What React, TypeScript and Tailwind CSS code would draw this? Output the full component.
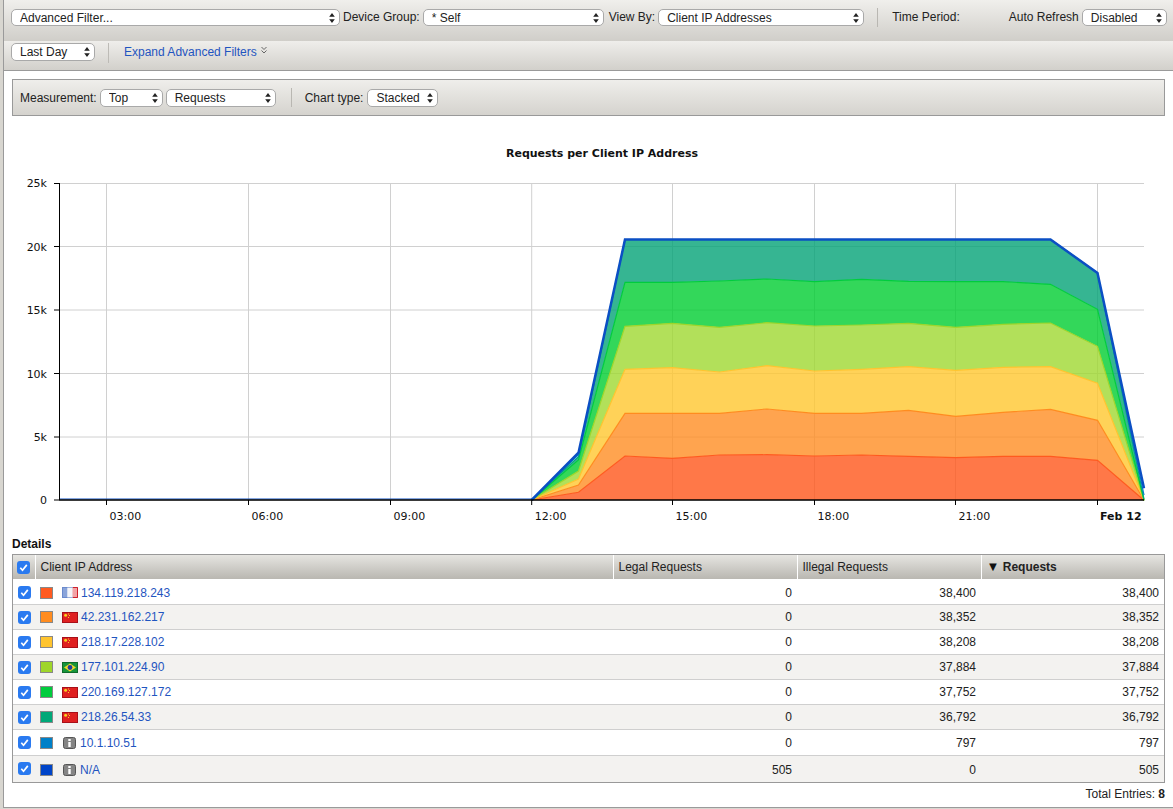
const xs = [531.7, 578.5, 625, 672.3, 719.5, 767, 814.5, 861.5, 908.5, 955.7, 1003, 1050.5, 1097.5, 1144];

const layers = [
  { color: '#ff561a', line: '#ff5a1f', tops: [500, 492.3, 456, 458.3, 455, 454.7, 456, 455, 456.3, 457.7, 456.3, 456.3, 460.3, 500.3] },
  { color: '#ff8d23', line: '#ff8c1f', tops: [500, 485, 413.3, 413.3, 413.3, 409, 413.3, 413.3, 410.3, 416.3, 412.3, 409.3, 420.3, 500.3] },
  { color: '#ffc72e', line: '#ffc42e', tops: [500, 479, 369.3, 367.7, 372, 365.7, 371, 369.3, 366.7, 370.3, 367.3, 366.7, 383.3, 500.3] },
  { color: '#9fd831', line: '#9fd62a', tops: [500, 471, 326.3, 323.3, 327.3, 322.7, 326, 325, 323.3, 327.3, 324.3, 323, 346.3, 500.3] },
  { color: '#00cd31', line: '#00cc3d', tops: [500, 460, 282.3, 282.3, 281, 279, 281.7, 279.3, 281.3, 281.7, 281.7, 284.3, 309.3, 500.3] },
  { color: '#04a277', line: '#00a878', tops: [500, 456.7, 239.5, 239.5, 239.5, 239.5, 239.5, 239.5, 239.5, 239.5, 239.5, 239.5, 273, 499] },
  { color: '#0080c8', line: '#0080c8', tops: [500, 454.7, 239.5, 239.5, 239.5, 239.5, 239.5, 239.5, 239.5, 239.5, 239.5, 239.5, 273, 495] },
  { color: '#0044c8', line: '#0b4fc4', tops: [500, 452.7, 239.5, 239.5, 239.5, 239.5, 239.5, 239.5, 239.5, 239.5, 239.5, 239.5, 273, 488.3] },
];

const yTicks = [
  { y: 183.5, label: '25k', dy: 3 },
  { y: 246.5, label: '20k', dy: 4 },
  { y: 310, label: '15k', dy: 4 },
  { y: 373.5, label: '10k', dy: 4 },
  { y: 437, label: '5k', dy: 4 },
  { y: 500, label: '0', dy: 4 },
];

const xTicks = [
  { x: 106.5, label: '03:00' },
  { x: 248.5, label: '06:00' },
  { x: 390.5, label: '09:00' },
  { x: 531.7, label: '12:00' },
  { x: 672.5, label: '15:00' },
  { x: 814.5, label: '18:00' },
  { x: 955.5, label: '21:00' },
  { x: 1097.5, label: 'Feb 12', bold: true },
];

const rows = [
  { ip: '134.119.218.243', flag: 'fr', swatch: 'bg-[#ff5a20]', legal: '0', illegal: '38,400', total: '38,400' },
  { ip: '42.231.162.217', flag: 'cn', swatch: 'bg-[#ff8c1f]', legal: '0', illegal: '38,352', total: '38,352' },
  { ip: '218.17.228.102', flag: 'cn', swatch: 'bg-[#ffc42e]', legal: '0', illegal: '38,208', total: '38,208' },
  { ip: '177.101.224.90', flag: 'br', swatch: 'bg-[#9fd62a]', legal: '0', illegal: '37,884', total: '37,884' },
  { ip: '220.169.127.172', flag: 'cn', swatch: 'bg-[#00cc3d]', legal: '0', illegal: '37,752', total: '37,752' },
  { ip: '218.26.54.33', flag: 'cn', swatch: 'bg-[#00a878]', legal: '0', illegal: '36,792', total: '36,792' },
  { ip: '10.1.10.51', flag: 'info', swatch: 'bg-[#0080c8]', legal: '0', illegal: '797', total: '797' },
  { ip: 'N/A', flag: 'info', swatch: 'bg-[#0044c8]', legal: '505', illegal: '0', total: '505' },
];

function Select({ value, className }: { value: string; className: string }) {
  return (
    <div className={`relative shrink-0 ${className}`}>
      <select
        defaultValue={value}
        className="appearance-none w-full h-full bg-white border border-[#a9a9a9] rounded-[5px] pl-2 text-xs text-[#222] outline-none"
      >
        <option>{value}</option>
      </select>
      <svg className="absolute right-[5px] top-1/2 -translate-y-1/2 pointer-events-none" width="6" height="11" viewBox="0 0 6 11">
        <path d="M3 0.5 L5.8 4.3 H0.2 Z M3 10.5 L5.8 6.7 H0.2 Z" fill="#222" />
      </svg>
    </div>
  );
}

function Checkbox() {
  return (
    <svg width="13" height="13" viewBox="0 0 13 13" className="block">
      <rect width="13" height="13" rx="3" fill="#2a7af0" />
      <path d="M3.3 6.8 L5.5 9.2 L9.8 3.9" fill="none" stroke="#fff" strokeWidth="1.7" />
    </svg>
  );
}

function Flag({ type }: { type: string }) {
  if (type === 'info') {
    return (
      <svg width="13" height="12" viewBox="0 0 13 12" className="block ml-px mr-[4px]">
        <rect x="0.5" y="0.5" width="12" height="11" rx="2" fill="#858585" stroke="#555" />
        <rect x="5.3" y="2" width="2.4" height="2" fill="#fff" />
        <rect x="5.3" y="5" width="2.4" height="5" fill="#fff" />
      </svg>
    );
  }
  return (
    <svg width="16" height="11" viewBox="0 0 16 11" className="block mr-[3px]">
      {type === 'fr' && (
        <>
          <rect width="16" height="11" fill="#e8ecf5" />
          <rect x="0" y="0" width="5.5" height="11" fill="#8aa4da" />
          <rect x="5.5" y="0" width="5" height="11" fill="#f4f5f9" />
          <rect x="10.5" y="0" width="5.5" height="11" fill="#f2a3a6" />
          <rect x="0.5" y="0.5" width="15" height="10" fill="none" stroke="#4a6fc0" strokeOpacity="0.5" />
          <path d="M11 0.5 H15.5 V10.5 H11" fill="none" stroke="#d0202a" />
        </>
      )}
      {type === 'cn' && (
        <>
          <rect width="16" height="11" fill="#df2020" />
          <rect x="0.5" y="0.5" width="15" height="10" fill="none" stroke="#a80f18" />
          <circle cx="3.6" cy="3.2" r="1.5" fill="#f8d020" />
          <rect x="6" y="1.5" width="1" height="1" fill="#f8d020" />
          <rect x="7" y="3" width="1" height="1" fill="#f8d020" />
          <rect x="6" y="5" width="1" height="1" fill="#f8d020" />
        </>
      )}
      {type === 'br' && (
        <>
          <rect width="16" height="11" fill="#17953a" />
          <rect x="0.5" y="0.5" width="15" height="10" fill="none" stroke="#0f6a2a" />
          <path d="M8 1.5 L14 5.5 L8 9.5 L2 5.5 Z" fill="#f4d92a" />
          <circle cx="8" cy="5.5" r="2.4" fill="#1f3f9a" />
        </>
      )}
    </svg>
  );
}

function areaPath(tops: number[], below: number[]) {
  const upper = tops.map((y, i) => `${xs[i]},${y}`).join(' L');
  const lower = below.map((y, i) => `${xs[i]},${y}`).reverse().join(' L');
  return `M${upper} L${lower} Z`;
}

function Chart() {
  const font = '"DejaVu Sans", sans-serif';
  return (
    <svg width="1169" height="420" viewBox="4 116 1169 420" className="block shrink-0">
      <text x="602" y="157" textAnchor="middle" fontFamily={font} fontSize="11" fontWeight="bold" fill="#111">
        Requests per Client IP Address
      </text>
      {yTicks.map((t) => (
        <g key={t.label}>
          <line x1="59" x2="1144" y1={t.y} y2={t.y} stroke="#d0d0d0" />
          <line x1="54" x2="59" y1={t.y} y2={t.y} stroke="#000" />
          <text x="47" y={t.y + t.dy} textAnchor="end" fontFamily={font} fontSize="11" fill="#111">
            {t.label}
          </text>
        </g>
      ))}
      {xTicks.map((t) => (
        <line key={t.label} x1={t.x} x2={t.x} y1="183" y2="500" stroke="#d0d0d0" />
      ))}
      {layers.slice(0, 6).map((l, i) => (
        <path
          key={l.color}
          d={areaPath(l.tops, i === 0 ? xs.map(() => 500) : layers[i - 1].tops)}
          fill={l.color}
          fillOpacity="0.8"
        />
      ))}
      {layers.map((l, i) => (
        <path
          key={l.line}
          d={`M${l.tops.map((y, j) => `${xs[j]},${y}`).join(' L')}`}
          fill="none"
          stroke={l.line}
          strokeWidth={i === 7 ? 2.5 : 1.2}
        />
      ))}
      <line x1="59" x2="532" y1="499" y2="499" stroke="#0b4fc4" strokeWidth="1" />
      <line x1="59.5" x2="59.5" y1="183" y2="500" stroke="#000" />
      <line x1="59" x2="1144" y1="500" y2="500" stroke="#000" strokeWidth="1.5" />
      {xTicks.map((t) => (
        <g key={t.label}>
          <line x1={t.x} x2={t.x} y1="500" y2="505" stroke="#000" />
          <text x={t.bold ? t.x + 2.5 : t.x + 3} y="520" fontFamily={font} fontSize="11" fontWeight={t.bold ? 'bold' : 'normal'} fill="#111">
            {t.label}
          </text>
        </g>
      ))}
    </svg>
  );
}

export default function App() {
  return (
    <div className="w-[1173px] h-[809px] overflow-hidden bg-white border-l-[3px] border-b border-[#d8d6d0] font-['Liberation_Sans',Arial,sans-serif] text-xs text-[#222]">
      <div className="h-full border-l border-b border-[#9a9a9a] flex flex-col">
        <div className="h-[41px] shrink-0 flex items-start gap-[3px] pl-[7px] pt-[9px] bg-gradient-to-b from-[#f0efec] to-[#d0cec9]">
          <Select value="Advanced Filter..." className="w-[329px] h-[17px]" />
          <span className="leading-[16px]">Device Group:</span>
          <Select value="* Self" className="w-[181px] h-[17px]" />
          <span className="leading-[16px] ml-[2px]">View By:</span>
          <Select value="Client IP Addresses" className="w-[206px] h-[17px]" />
          <div className="w-px h-[19px] bg-[#b9b7b2] ml-[10px] -mt-px" />
          <span className="leading-[16px] ml-[11px]">Time Period:</span>
          <span className="leading-[16px] ml-[46px]">Auto Refresh</span>
          <Select value="Disabled" className="w-[85px] h-[17px]" />
        </div>

        <div className="h-[30px] shrink-0 flex items-start pl-[7px] pt-[2px] bg-gradient-to-b from-[#efeeeb] to-[#d2d0cb] border-b border-[#9a9a9a]">
          <Select value="Last Day" className="w-[84px] h-[18px]" />
          <div className="w-px h-[20px] bg-[#bdbbb6] ml-[13px]" />
          <a className="ml-[15px] leading-[18px] text-[#1f55c0]">Expand Advanced Filters</a>
          <svg className="ml-[4px] mt-[3px]" width="6" height="9" viewBox="0 0 6 9">
            <path d="M0.5 1 L3 3.5 L5.5 1 M0.5 4.5 L3 7 L5.5 4.5" fill="none" stroke="#666" />
          </svg>
        </div>

        <div className="h-[37px] shrink-0 mt-[8px] ml-[8px] mr-[8px] flex items-center gap-[3px] pl-[7px] border border-[#999] bg-gradient-to-b from-[#efeeeb] to-[#d5d3ce]">
          <span>Measurement:</span>
          <Select value="Top" className="w-[63px] h-[18px]" />
          <Select value="Requests" className="w-[110px] h-[18px]" />
          <div className="w-px h-[19px] bg-[#b9b7b2] ml-[12px]" />
          <span className="ml-[10px]">Chart type:</span>
          <Select value="Stacked" className="w-[71px] h-[18px] ml-px" />
        </div>

        <Chart />

        <div className="h-[18px] shrink-0 pl-[8px] pt-px font-bold text-[#111] leading-[14px]">Details</div>

        <div className="mx-[8px] border border-[#999]">
          <table className="w-full table-fixed border-collapse">
            <colgroup>
              <col className="w-[22px]" />
              <col className="w-[578px]" />
              <col className="w-[184px]" />
              <col className="w-[184px]" />
              <col />
            </colgroup>
            <thead>
              <tr className="h-[24px] bg-gradient-to-b from-[#e6e5e1] to-[#b9b7b1]">
                <th className="border-r border-white p-0">
                  <div className="flex justify-center">
                    <Checkbox />
                  </div>
                </th>
                <th className="border-r border-white text-left font-normal pl-[5px]">Client IP Address</th>
                <th className="border-r border-white text-left font-normal pl-[5px]">Legal Requests</th>
                <th className="border-r border-white text-left font-normal pl-[5px]">Illegal Requests</th>
                <th className="text-left font-bold pl-[5px]">
                  <span className="text-[13px] leading-none text-[#111]">▼</span> Requests
                </th>
              </tr>
            </thead>
            <tbody>
              {rows.map((r, i) => {
                const nudge = i === 0 ? 'pt-[3px]' : i > 5 ? 'pt-[2px]' : 'pt-px';
                return (
                  <tr
                    key={r.ip}
                    className={`${i === 7 ? 'h-[27px]' : i === 6 ? 'h-[26px]' : 'h-[25px]'} border-b border-[#cfcfcf] last:border-b-0 ${i % 2 ? 'bg-[#f3f2f0]' : 'bg-white'}`}
                  >
                    <td className={`p-0 ${i === 0 ? 'pt-[2px]' : i < 6 ? 'pt-px' : ''}`}>
                      <div className="flex justify-center">
                        <Checkbox />
                      </div>
                    </td>
                    <td className={`p-0 ${nudge}`}>
                      <div className="flex items-center">
                        <div className={`w-[13px] h-[12px] ml-[5px] mr-[9px] border border-[#888] ${r.swatch}`} />
                        <Flag type={r.flag} />
                        <a className="text-[#1f55c0]">{r.ip}</a>
                      </div>
                    </td>
                    <td className={`text-right pr-[5px] ${nudge}`}>{r.legal}</td>
                    <td className={`text-right pr-[5px] ${nudge}`}>{r.illegal}</td>
                    <td className={`text-right pr-[5px] ${nudge}`}>{r.total}</td>
                  </tr>
                );
              })}
            </tbody>
          </table>
        </div>

        <div className="mr-[8px] mt-[4px] text-right leading-[14px]">
          Total Entries: <span className="font-bold">8</span>
        </div>
      </div>
    </div>
  );
}
